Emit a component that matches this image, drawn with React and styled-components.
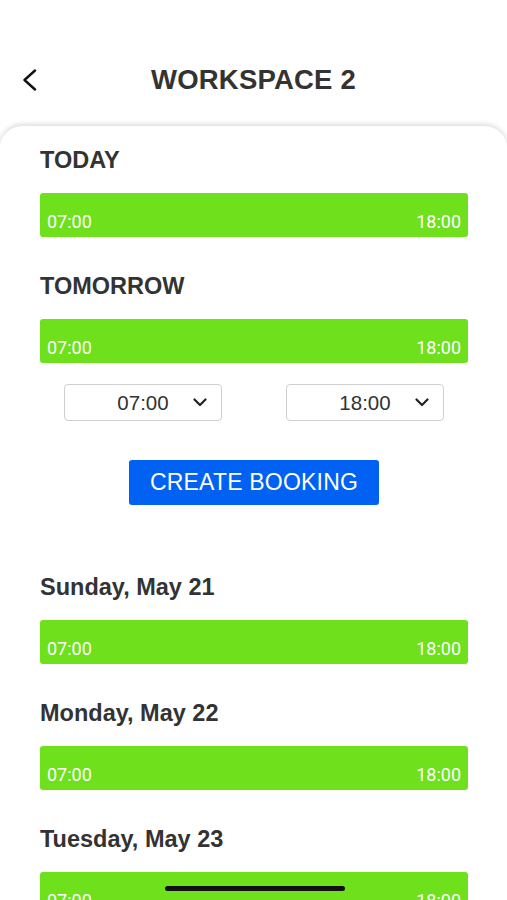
import React from "react";
import styled, { createGlobalStyle } from "styled-components";

const GlobalStyle = createGlobalStyle`
  body {
    margin: 0;
    background: #ffffff;
    font-family: Roboto, "Liberation Sans", Arial, sans-serif;
    overflow: hidden;
  }
`;

const Screen = styled.div`
  width: 507px;
  height: 900px;
  overflow: hidden;
  background: #ffffff;
`;

const Header = styled.div`
  height: 126px;
  display: grid;
  grid-template-columns: 60px 1fr 60px;
  align-items: center;
  padding-top: 34px;
  box-sizing: border-box;
`;

const BackButton = styled.button`
  border: none;
  background: none;
  padding: 0 0 0 21px;
  display: flex;
  align-items: center;
  cursor: pointer;
`;

const Title = styled.h1`
  margin: 0;
  text-align: center;
  font-family: "Liberation Sans", Arial, sans-serif;
  font-size: 27.5px;
  font-weight: 700;
  color: #333333;
  letter-spacing: 0.2px;
`;

const Card = styled.div`
  border-radius: 22px 22px 0 0;
  box-shadow: 0 -2px 5px rgba(0, 0, 0, 0.14);
  padding: 22px 39px 0 40px;
  display: flex;
  flex-direction: column;
`;

const DayLabel = styled.div`
  font-family: "Liberation Sans", Arial, sans-serif;
  font-size: 23.5px;
  line-height: 24px;
  font-weight: 700;
  color: #333333;
  margin-top: ${(p) => p.$top || 0}px;
`;

const Bar = styled.div`
  margin-top: 21px;
  height: 44px;
  border-radius: 3px;
  background: #6ee01c;
  display: flex;
  align-items: flex-end;
  justify-content: space-between;
  padding: 0 7px 5px;
  box-sizing: border-box;
  color: #ffffff;
  font-family: Roboto, "Liberation Sans", sans-serif;
  font-size: 18px;
`;

const SelectRow = styled.div`
  margin-top: 21px;
  display: flex;
  justify-content: center;
  gap: 64px;
`;

const Select = styled.div`
  width: 158px;
  height: 37px;
  box-sizing: border-box;
  border: 1px solid #cfcfcf;
  border-radius: 4px;
  display: grid;
  grid-template-columns: 1fr auto 1fr;
  align-items: center;
  font-family: "Liberation Sans", Arial, sans-serif;
  font-size: 20.5px;
  color: #333333;
`;

const SelectValue = styled.span`
  grid-column: 2;
`;

const Chevron = styled.span`
  grid-column: 3;
  justify-self: end;
  padding-right: 14px;
  display: flex;
`;

const ButtonRow = styled.div`
  margin-top: 39px;
  display: flex;
  justify-content: center;
`;

const PrimaryButton = styled.button`
  width: 250px;
  height: 45px;
  border: none;
  border-radius: 3px;
  background: #0061f2;
  color: #ffffff;
  font-family: "Liberation Sans", Arial, sans-serif;
  font-size: 23px;
  letter-spacing: 0.2px;
  padding: 0;
  cursor: pointer;
`;

const HomeIndicator = styled.div`
  position: fixed;
  left: 165px;
  bottom: 9px;
  width: 180px;
  height: 5px;
  border-radius: 3px;
  background: #111111;
`;

const days = [
  { label: "TODAY", top: 0 },
  { label: "TOMORROW", top: 37 },
];

const upcoming = ["Sunday, May 21", "Monday, May 22", "Tuesday, May 23"];

function DownIcon() {
  return (
    <svg width="14" height="9" viewBox="0 0 14 9">
      <path d="M1.5 1.5 L7 7 L12.5 1.5" fill="none" stroke="#222" strokeWidth="2.2" strokeLinecap="round" strokeLinejoin="round" />
    </svg>
  );
}

function TimeBar() {
  return (
    <Bar>
      <span>07:00</span>
      <span>18:00</span>
    </Bar>
  );
}

export default function App() {
  return (
    <Screen>
      <GlobalStyle />
      <Header>
        <BackButton aria-label="Back">
          <svg width="16" height="22" viewBox="0 0 16 22">
            <path d="M14 1.5 L3.5 11 L14 20.5" fill="none" stroke="#111" strokeWidth="2.4" strokeLinecap="round" strokeLinejoin="round" />
          </svg>
        </BackButton>
        <Title>WORKSPACE 2</Title>
        <span />
      </Header>
      <Card>
        {days.map((d) => (
          <React.Fragment key={d.label}>
            <DayLabel $top={d.top}>{d.label}</DayLabel>
            <TimeBar />
          </React.Fragment>
        ))}
        <SelectRow>
          <Select>
            <SelectValue>07:00</SelectValue>
            <Chevron><DownIcon /></Chevron>
          </Select>
          <Select>
            <SelectValue>18:00</SelectValue>
            <Chevron><DownIcon /></Chevron>
          </Select>
        </SelectRow>
        <ButtonRow>
          <PrimaryButton>CREATE BOOKING</PrimaryButton>
        </ButtonRow>
        {upcoming.map((label, i) => (
          <React.Fragment key={label}>
            <DayLabel $top={i === 0 ? 70 : 37}>{label}</DayLabel>
            <TimeBar />
          </React.Fragment>
        ))}
      </Card>
      <HomeIndicator />
    </Screen>
  );
}
